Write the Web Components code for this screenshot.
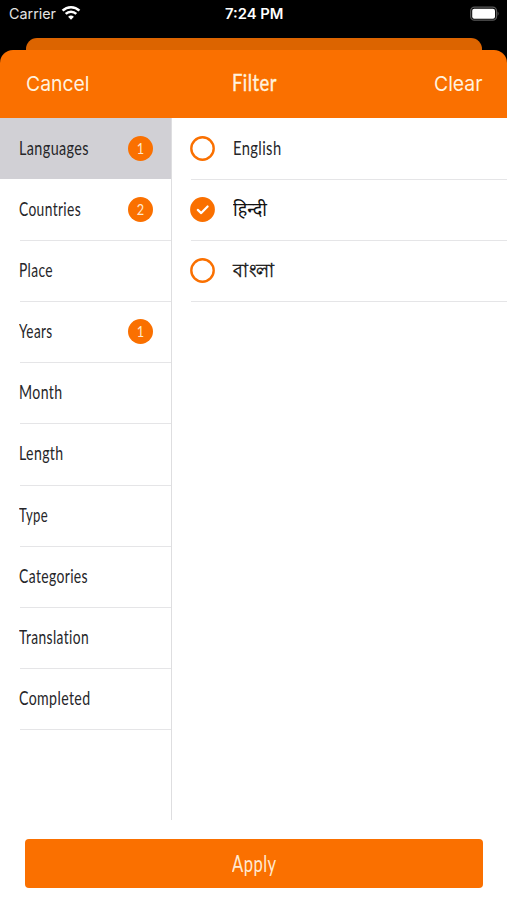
<!DOCTYPE html>
<html lang="en">
<head>
<meta charset="utf-8">
<title>Filter</title>
<style>
html,body{margin:0;height:100%;background:#000;overflow:hidden}
body{font-family:Lato,"Noto Sans",sans-serif;font-variant-ligatures:none;color:#262629;--accent:#fa7000;--line:#e5e5e7}
</style>
</head>
<body>
<filter-screen></filter-screen>
<script>
const define = (name, html, ready) => customElements.define(name, class extends HTMLElement {
  connectedCallback() {
    if (this.shadowRoot) return;
    this.attachShadow({mode: 'open'}).innerHTML = html;
    if (ready) ready.call(this, this.shadowRoot);
  }
});

/* Condenses its label horizontally to the width given in the w attribute. */
define('fit-text', `<style>
:host{display:inline-block;white-space:nowrap;flex:none}
span{display:inline-block;transform-origin:0 50%}
</style><span></span>`, function (root) {
  const span = root.querySelector('span');
  span.textContent = this.getAttribute('label');
  const w = +this.getAttribute('w');
  this.style.width = w + 'px';
  span.style.transform = `scaleX(${w / span.getBoundingClientRect().width})`;
});

define('status-bar', `<style>
:host{display:grid;grid-template-columns:1fr auto 1fr;align-items:center;height:28px;padding:0 7px 0 9px;box-sizing:border-box;color:#fff;font:14.5px/28px Inter,sans-serif}
.l{display:flex;align-items:center;gap:5px;color:#e4e4e4}
.t{font-weight:600}
.r{display:flex;justify-content:flex-end}
svg{display:block}
.l svg{margin-bottom:2px}
</style>
<div class="l"><fit-text label="Carrier" w="47"></fit-text>
<svg width="20" height="16" viewBox="0 0 20 16" fill="none" stroke="#fff" stroke-width="2.5"><path d="M1.6 5.6a12 12 0 0 1 16.8 0M4.7 8.9a7.6 7.6 0 0 1 10.6 0"/><path d="M10 14.7 7.1 11.8a4.2 4.2 0 0 1 5.8 0z" fill="#fff" stroke="none"/></svg></div>
<div class="t"><fit-text label="7:24 PM" w="58.5"></fit-text></div>
<div class="r"><svg width="30" height="16" viewBox="0 0 30 16"><rect x=".7" y="1.2" width="25.8" height="13" rx="3.8" fill="#000" stroke="#5a5a5a" stroke-width="1.3"/><rect x="2.2" y="2.7" width="22.8" height="10" rx="2" fill="#fff"/><path d="M27.6 5.5q2 2.2 0 4.4z" fill="#5a5a5a"/></svg></div>`);

define('nav-header', `<style>
:host{display:grid;grid-template-columns:1fr auto 1fr;align-items:center;height:68px;padding:0 25px 0 26px;box-sizing:border-box;background:var(--accent);color:#fff2df;border-radius:13px 13px 0 0;font:20.7px/68px Inter,sans-serif}
.c{font:24px/64px Lato,sans-serif;height:68px;letter-spacing:.6px;-webkit-text-stroke:.4px}
.r{text-align:right}
</style>
<fit-text label="Cancel" w="63.5"></fit-text>
<div class="c"><fit-text label="Filter" w="45"></fit-text></div>
<div class="r"><fit-text label="Clear" w="48.5"></fit-text></div>`);

define('category-row', `<style>
:host{display:flex;height:61.1px;padding-left:20px;box-sizing:border-box;font-size:18.6px;letter-spacing:.5px}
:host([selected]){background:#d1d0d5}
.b{flex:1;display:flex;align-items:center;justify-content:space-between;padding-right:18px;box-shadow:0 1px var(--line)}
:host([selected]) .b{box-shadow:none}
fit-text{margin-left:-.7px;padding-bottom:1.2px}
i{display:flex;align-items:center;justify-content:center;width:25px;height:25px;border-radius:50%;background:var(--accent);color:#ffe9cf;font:15.5px/25px Lato,sans-serif;letter-spacing:0}
i span{transform:scaleX(.82)}
</style><div class="b"></div>`, function (root) {
  const n = this.getAttribute('count');
  root.querySelector('.b').innerHTML =
    `<fit-text label="${this.getAttribute('label')}" w="${this.getAttribute('w')}"></fit-text>` + (n ? `<i><span>${n}</span></i>` : '');
});

define('option-row', `<style>
:host{display:block;height:61.1px;padding-left:19px;box-sizing:border-box;font-size:18.6px;letter-spacing:.5px}
.b{height:100%;display:flex;align-items:center;box-shadow:0 1px var(--line);gap:17.5px}
svg{flex:none;margin-left:-1px}
:host([checked]) circle{fill:var(--accent)}
path{display:none}
:host([checked]) path{display:block}
</style>
<div class="b"><svg width="25" height="25" viewBox="0 0 25 25" fill="none"><circle cx="12.5" cy="12.5" r="11.2" stroke="var(--accent)" stroke-width="2.4"/><path d="M7.8 12.9 11.2 16.1 17.6 9.5" stroke="#fff" stroke-width="2.2" stroke-linecap="round" stroke-linejoin="round"/></svg>
<slot></slot></div>`);

define('apply-button', `<style>
:host{display:flex;align-items:center;justify-content:center;height:49px;border-radius:4px;background:var(--accent);color:#ffead2;font:22.5px/49px Lato,sans-serif;letter-spacing:.6px}
</style><fit-text label="Apply" w="44.5"></fit-text>`);

define('filter-screen', `<style>
:host{display:flex;flex-direction:column;height:900px;width:507px;background:#000}
.back{height:12px;margin:10px 25px 0 26px;background:#dc6400;border-radius:11px 11px 0 0}
.sheet{flex:1;display:flex;flex-direction:column}
.body{height:702px;display:grid;grid-template-columns:172px 1fr;background:#fff}
.side{border-right:1px solid #dedee0}
.foot{flex:1;background:#fff;padding:19px 24.5px 0 25px}
.en{padding-bottom:1.2px}
.hi{letter-spacing:0;padding-bottom:3px;color:#111}
.bn{letter-spacing:0;font-size:19px;-webkit-text-stroke:.4px;padding-top:2px;color:#111}
</style>
<status-bar></status-bar>
<div class="back"></div>
<div class="sheet">
<nav-header></nav-header>
<div class="body">
<div class="side">
<category-row selected label="Languages" w="70" count="1"></category-row>
<category-row label="Countries" w="62" count="2"></category-row>
<category-row label="Place" w="34"></category-row>
<category-row label="Years" w="33.5" count="1"></category-row>
<category-row label="Month" w="43.5"></category-row>
<category-row label="Length" w="44.5"></category-row>
<category-row label="Type" w="29"></category-row>
<category-row label="Categories" w="69"></category-row>
<category-row label="Translation" w="70"></category-row>
<category-row label="Completed" w="71.5"></category-row>
</div>
<div>
<option-row><fit-text class="en" label="English" w="48.5"></fit-text></option-row>
<option-row checked><fit-text class="hi" label="हिन्दी" w="34"></fit-text></option-row>
<option-row><fit-text class="bn" label="বাংলা" w="41.5"></fit-text></option-row>
</div>
</div>
<div class="foot"><apply-button></apply-button></div>
</div>`);
</script>
</body>
</html>
